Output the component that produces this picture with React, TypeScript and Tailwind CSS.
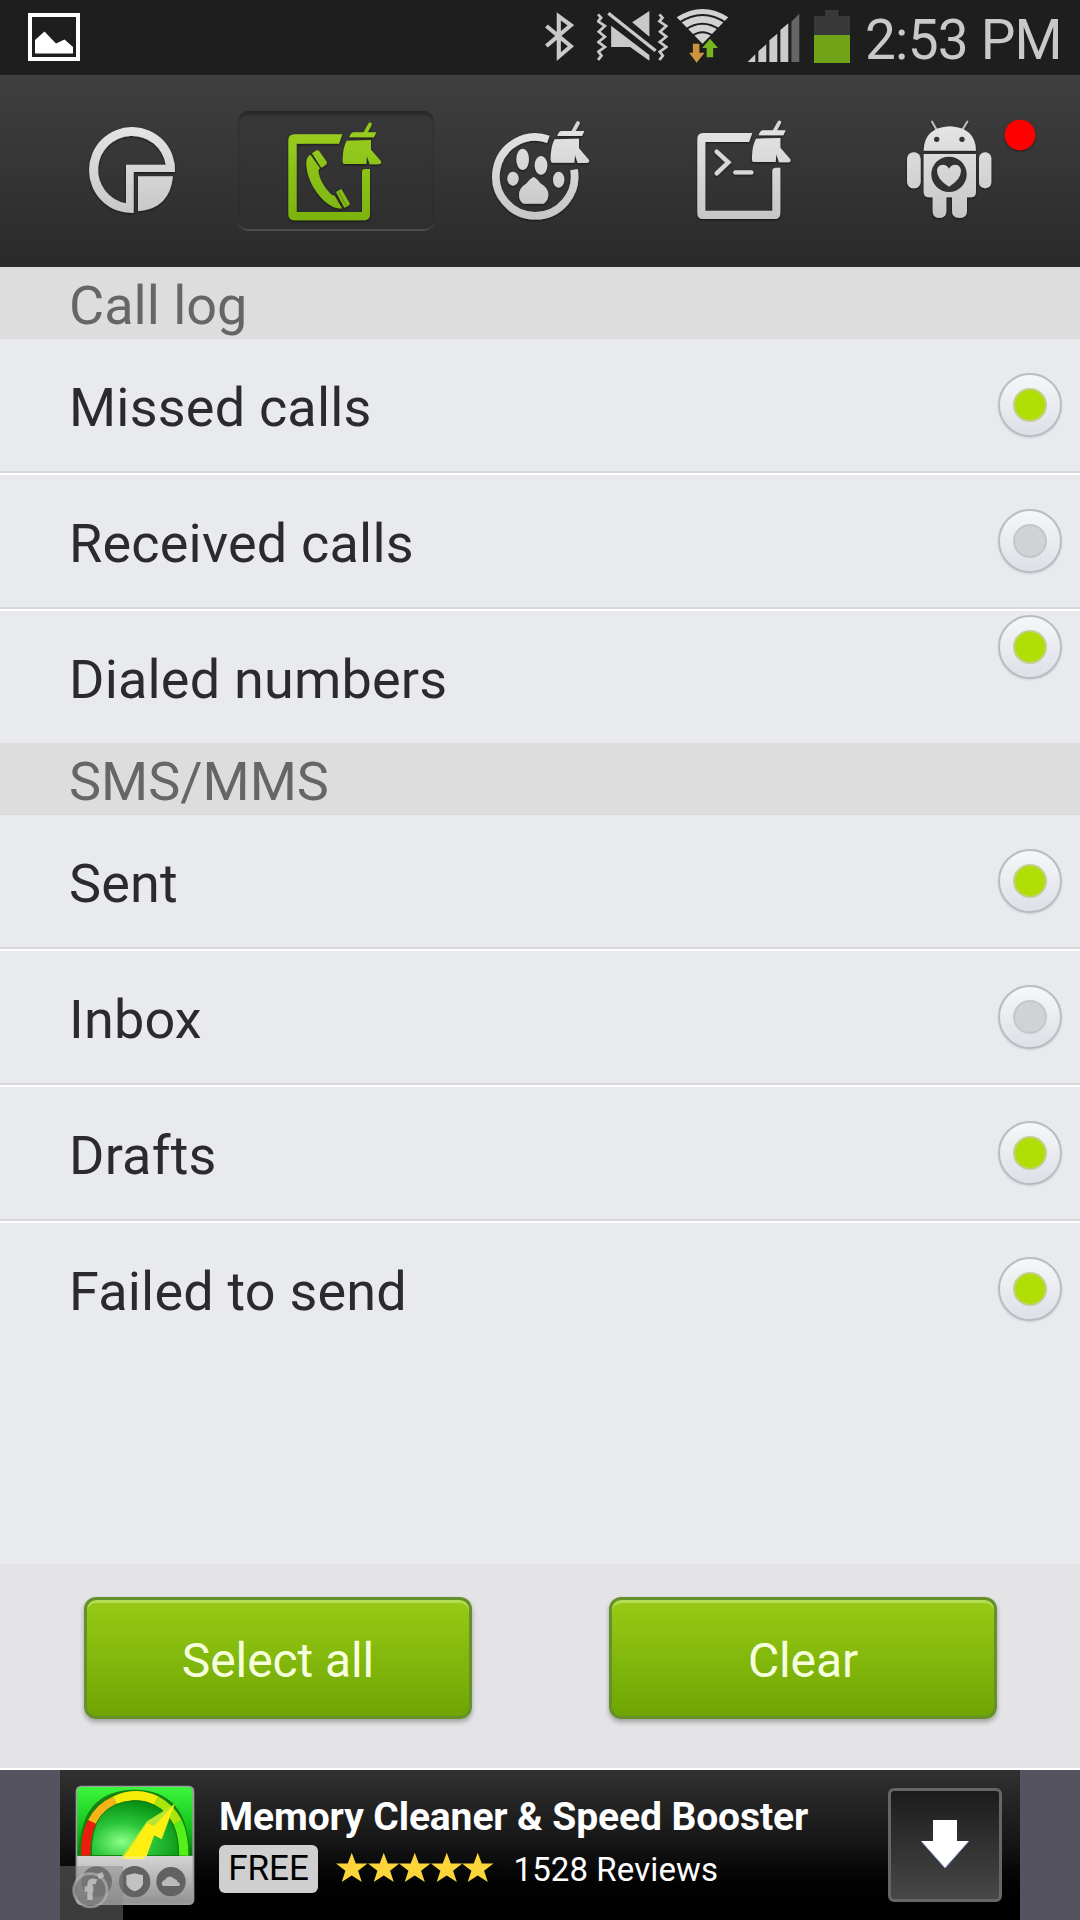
import React, { useState } from 'react';

type Item = { id: string; label: string; last?: boolean; raised?: boolean };

const callLog: Item[] = [
  { id: 'missed', label: 'Missed calls' },
  { id: 'received', label: 'Received calls' },
  { id: 'dialed', label: 'Dialed numbers', last: true, raised: true },
];

const messages: Item[] = [
  { id: 'sent', label: 'Sent' },
  { id: 'inbox', label: 'Inbox' },
  { id: 'drafts', label: 'Drafts' },
  { id: 'failed', label: 'Failed to send', last: true },
];

const allIds = [...callLog, ...messages].map((item) => item.id);

function StatusBar() {
  return (
    <div className="flex h-[75px] shrink-0 bg-[#1e1e1e] pl-7">
      <svg className="h-[75px] w-[52px]" viewBox="0 0 52 75">
        <rect x="2" y="15" width="48" height="44" fill="none" stroke="#fff" strokeWidth="4" />
        <path d="M7 53.5V40l9.500-8.500L28 43.500l8.500-4L45 47v6.500z" fill="#fff" />
      </svg>
      {/* bluetooth */}
      <svg className="ml-[465px] h-[75px] w-[29px]" viewBox="15 0 84 225" preserveAspectRatio="none">
        <path d="M19 78 90 139 55 170V49L90 76 19 138" fill="none" stroke="#c9c9c9" strokeWidth="12" />
      </svg>
      {/* sound off + vibrate */}
      <svg className="ml-[23px] h-[75px] w-[71px]" viewBox="165 0 206 225" preserveAspectRatio="none">
        <g fill="none" stroke="#c9c9c9" strokeWidth="8">
          <path d="M168 43l9 10-9 11 20 14-18 17 18 15-19 16 19 15-19 14 9 12-10 13" />
          <path d="M346 43l9 10-9 11 20 14-18 17 18 15-19 16 19 15-19 14 9 12-10 13" />
          <path d="M198 40 335 152" strokeWidth="10" />
        </g>
        <path d="M317 33v77l-50-43zM206 77l111 88v17l-56-41h-55z" fill="#c9c9c9" />
      </svg>
      {/* wifi */}
      <svg className="ml-2 h-[75px] w-[53px]" viewBox="394 0 154 225" preserveAspectRatio="none">
        <path d="M471 131 396 52Q471 2 546 52z" fill="#d2d2d2" />
        <g fill="none" stroke="#1e1e1e" strokeWidth="6">
          <path d="M402 69q69-48 138 0" />
          <path d="M421 89q50-36 100 0" />
          <path d="M438 110q33-26 66 0" />
        </g>
        <path d="M443 131h19v27h15l-23 30-22-30h11z" fill="#cf9440" />
        <path d="M493 116l23 28h-14v28h-19v-28h-13z" fill="#76b51b" />
      </svg>
      {/* signal strength */}
      <svg className="ml-[18px] h-[75px] w-[53px]" viewBox="600 0 154 225" preserveAspectRatio="none">
        <path d="M602 186l22-23v23zM633 186v-32l23-21v53zM665 186v-65l23-20v85zM697 186V90l23-20v116z" fill="#cbcbcb" />
        <path d="M729 186V65l23-24v145z" fill="#666" />
      </svg>
      {/* battery */}
      <svg className="ml-3.5 h-[75px] w-9" viewBox="796 0 104 225" preserveAspectRatio="none">
        <path d="M828 30h39v18h33v58H796V48h32z" fill="#393939" />
        <path d="M796 105h104v84H796z" fill="#70a317" />
      </svg>
      <span className="ml-[15px] mt-2 whitespace-nowrap text-[55px] leading-[64px] tracking-[-0.8px] text-[#c9c9c9]">
        2:53 PM
      </span>
    </div>
  );
}

function Broom({ transform, fill }: { transform: string; fill: string }) {
  return (
    <g transform={transform} fill={fill}>
      <path d="M354 69 338 98" stroke="#d5d5d5" strokeWidth="11" strokeLinecap="round" className={fill === 'url(#green)' ? 'stroke-[#8fc61b]' : ''} />
      <path d="M303 93h70l-7 15h-74q3-12 11-15z" />
      <path d="M284 118l73-2v29l30 35q3 9-9 9h-25l-8-24-2 23h-66q-6 0-5-16 1-34 12-54z" />
    </g>
  );
}

function NavIcon({ viewBox, children }: { viewBox: string; children: React.ReactNode }) {
  return (
    <svg className="h-[116px] w-[196px] overflow-visible" viewBox={viewBox}>
      <g filter="url(#drop)">{children}</g>
    </svg>
  );
}

function NavBar() {
  return (
    <nav className="flex h-48 shrink-0 items-start gap-2 bg-linear-to-b from-[#3f3f3f] via-[#353535] to-[#2a2a2a] pl-[34px] pt-[38px]">
      <svg className="absolute h-0 w-0">
        <defs>
          <linearGradient id="silver" gradientUnits="userSpaceOnUse" x1="0" y1="80" x2="0" y2="360">
            <stop offset="0" stopColor="#e4e4e4" />
            <stop offset="1" stopColor="#c6c6c6" />
          </linearGradient>
          <linearGradient id="green" gradientUnits="userSpaceOnUse" x1="0" y1="70" x2="0" y2="365">
            <stop offset="0" stopColor="#9bcf20" />
            <stop offset="1" stopColor="#7bb30f" />
          </linearGradient>
          <filter id="drop" x="-20%" y="-20%" width="140%" height="140%">
            <feDropShadow dx="0" dy="3" stdDeviation="3" floodColor="#000" floodOpacity="0.6" />
          </filter>
        </defs>
      </svg>

      <NavIcon viewBox="-78 39 588 348">
        <path
          fill="url(#silver)"
          fillRule="evenodd"
          d="M221 339A129 129 0 1 1 345 216H221zM198 310V194H317A102 102 0 1 0 198 310z"
        />
        <path d="M234 229H339Q329 327 234 334z" fill="url(#silver)" />
      </NavIcon>

      <div className="-mt-0.5 rounded-[10px] border-y-2 border-t-[#272727] border-b-[#4c4c4c] bg-[#333]/30 shadow-[inset_0_2px_3px_rgba(0,0,0,0.25)]">
        <NavIcon viewBox="534 39 588 348">
          <path
            fill="url(#green)"
            d="M847 103 837 131H710V336H906V213Q907 207 917 207H930V343Q930 361 911 361H704Q685 361 685 342V122Q685 103 704 103z"
          />
          <path
            fill="url(#green)"
            d="M751 164Q738 171 739 195Q744 255 793 303Q820 327 846 325L824 287Q816 287 810 280Q779 247 775 213Q776 207 780 205zM756 160 770 151Q775 150 779 155L801 187Q801 192 796 196L784 203zM828 276 844 267 869 310Q870 315 864 318L853 323z"
          />
          <path d="M836 275 859 318" stroke="#4f7610" strokeWidth="2" />
          <Broom transform="translate(576 4)" fill="url(#green)" />
        </NavIcon>
      </div>

      <NavIcon viewBox="-54 39 588 348">
        <path
          d="M265 118A118 118 0 1 0 342 209"
          fill="none"
          stroke="url(#silver)"
          strokeWidth="23"
        />
        <g fill="url(#silver)">
          <ellipse cx="188" cy="178" rx="19" ry="32" />
          <ellipse cx="243" cy="196" rx="19" ry="28" />
          <ellipse cx="159" cy="236" rx="17" ry="21" />
          <ellipse cx="296" cy="239" rx="17" ry="24" />
          <path d="M221 231Q230 235 241 250Q266 265 265 285Q264 304 250 311H191Q177 304 177 285Q177 264 200 250Q211 235 221 231z" />
        </g>
        <Broom transform="translate(0 0)" fill="url(#silver)" />
      </NavIcon>

      <NavIcon viewBox="558 39 588 348">
        <path
          fill="url(#silver)"
          d="M877 99 867 126H736V332H937V211Q938 203 948 203H961V338Q961 357 943 357H730Q712 357 712 339V117Q712 99 730 99z"
        />
        <g fill="none" stroke="#d8d8d8" strokeWidth="13" strokeLinecap="round">
          <path d="M770 155 805 187 770 220" />
          <path d="M826 217h48" />
        </g>
        <Broom transform="translate(604 -2)" fill="url(#silver)" />
      </NavIcon>

      <NavIcon viewBox="-30 39 588 348">
        <g fill="url(#silver)">
          <path d="M216 65 229 88M322 65 308 88" stroke="#bdbdbd" strokeWidth="6" strokeLinecap="round" />
          <path d="M191 152Q192 83 269 79Q347 83 348 152z" />
          <rect x="141" y="157" width="41" height="108" rx="20" />
          <rect x="357" y="157" width="37" height="108" rx="18" />
          <path d="M191 162H348V276Q348 292 332 292H321V334Q321 354 299 354Q276 354 276 334V292H259V334Q259 354 238 354Q218 354 218 334V292H207Q191 292 191 276z" />
        </g>
        <circle cx="230" cy="118" r="8" fill="#303030" />
        <circle cx="306" cy="118" r="8" fill="#303030" />
        <circle cx="267" cy="223" r="53" fill="#303030" />
        <path
          d="M267 260Q231 238 231 212Q232 195 248 194Q261 194 267 206Q273 194 286 194Q302 195 303 212Q303 238 267 260z"
          fill="url(#silver)"
        />
        <circle cx="480" cy="105" r="46" fill="#ff0000" />
      </NavIcon>
    </nav>
  );
}

function SectionHeader({ title }: { title: string }) {
  return (
    <div className="flex h-[72px] shrink-0 items-center border-b border-[#d8d8da] bg-[#dddddd] pl-[69px] pt-1.5 text-[54px] leading-none text-[#666]">
      {title}
    </div>
  );
}

function Radio({ checked }: { checked: boolean }) {
  return (
    <span className="flex size-16 items-center justify-center rounded-full border-2 border-[#b9bcc1] bg-linear-to-b from-[#f6f7f9] to-[#dde0e7] shadow-[0_1px_2px_rgba(0,0,0,0.12)]">
      <span
        className={
          checked
            ? 'size-[34px] rounded-full border-2 border-[#c3cf8e] bg-[#b1de05]'
            : 'size-[34px] rounded-full border-2 border-[#c6c7c8] bg-[#d1d2d3]'
        }
      />
    </span>
  );
}

type RowProps = { item: Item; checked: boolean; onToggle: (id: string) => void };

function Row({ item, checked, onToggle }: RowProps) {
  return (
    <div className={item.last ? 'shrink-0' : 'shrink-0 border-b-2 border-white'}>
      <div
        onClick={() => onToggle(item.id)}
        className={
          item.last
            ? 'flex h-[132px] justify-between pl-[69px] pr-[18px]'
            : 'flex h-[134px] justify-between border-b-2 border-[#d7d9db] pl-[69px] pr-[18px]'
        }
      >
        <span className="mt-[39px] text-[54px] leading-[60px] tracking-[0.2px] text-[#2b2b2d]">{item.label}</span>
        <div className={item.raised ? 'pt-1' : 'pt-[34px]'}>
          <Radio checked={checked} />
        </div>
      </div>
    </div>
  );
}

function ActionButton({ label, onClick }: { label: string; onClick: () => void }) {
  return (
    <button
      onClick={onClick}
      className="h-[122px] w-[388px] rounded-xl border-[3px] border-[#65902a] bg-linear-to-b from-[#97cb16] to-[#6fa503] pt-[5px] text-5xl tracking-[-0.1px] text-[#f6ffdc] shadow-[inset_0_3px_0_#b4dc56,0_3px_5px_rgba(0,0,0,0.3)]"
    >
      {label}
    </button>
  );
}

function AppBadge() {
  return (
    <svg className="h-[150px] w-[140px]" viewBox="60 30 420 450">
      <defs>
        <radialGradient id="dial" cx="0.35" cy="0.75" r="0.75">
          <stop offset="0" stopColor="#8cff86" />
          <stop offset="0.45" stopColor="#2cc73b" />
          <stop offset="1" stopColor="#078f12" />
        </radialGradient>
        <linearGradient id="face" x1="0" y1="0" x2="0" y2="1">
          <stop offset="0" stopColor="#3df53e" />
          <stop offset="0.6" stopColor="#12c41a" />
          <stop offset="1" stopColor="#047a0b" />
        </linearGradient>
        <linearGradient id="base" x1="0" y1="0" x2="0" y2="1">
          <stop offset="0" stopColor="#d5d5d5" />
          <stop offset="1" stopColor="#929292" />
        </linearGradient>
      </defs>
      <rect x="107" y="77" width="356" height="358" rx="16" fill="#9a9d9a" />
      <path d="M112 287V94Q112 81 125 81H444Q457 81 457 94V287z" fill="url(#face)" />
      <path d="M118 287Q116 90 284 89Q448 90 448 287z" fill="#16820f" />
      <g fill="none" strokeWidth="28">
        <path d="M138 287Q134 228 157 186" stroke="#ee1c0c" />
        <path d="M157 186Q178 143 225 122" stroke="#f7b318" />
        <path d="M225 122Q290 92 349 122" stroke="#f5ed08" />
        <path d="M349 122Q391 145 413 187" stroke="#a8e60c" />
        <path d="M413 187Q432 228 431 287" stroke="#55ef19" />
      </g>
      <path d="M154 287Q149 128 284 122Q415 128 416 287z" fill="url(#dial)" stroke="#117d10" strokeWidth="3" />
      <path d="M404 132 321 184 240 297H316L343 226 366 238z" fill="#b6e632" />
      <path d="M404 132 343 198 321 190 248 297H317L342 225 363 236z" fill="#ffef12" />
      <path d="M112 288H458V417Q458 430 445 430H125Q112 430 112 417z" fill="url(#base)" />
      <path d="M254 288H316L312 297H247z" fill="#ffef52" />
      <g fill="#626262">
        <circle cx="170" cy="365" r="46" />
        <circle cx="284" cy="365" r="47" />
        <circle cx="393" cy="365" r="44" />
      </g>
      <path d="M259 346 284 340 309 346V371Q306 386 284 394Q262 386 259 371z" fill="#c2c2c2" />
      <path d="M368 378Q360 365 375 359Q386 341 403 356Q412 358 413 366Q425 371 417 378z" fill="#bababa" />
      <rect x="60" y="318" width="189" height="162" fill="#858585" fillOpacity="0.45" />
      <circle cx="151" cy="391" r="50" fill="#777" fillOpacity="0.6" stroke="#bbb" strokeOpacity="0.6" strokeWidth="8" />
      <path
        d="M150 420V373Q151 358 169 366M134 387H160M174 350 190 343"
        fill="none"
        stroke="#c8c8c8"
        strokeOpacity="0.8"
        strokeWidth="16"
      />
    </svg>
  );
}

function Star() {
  return (
    <svg className="h-[31px] w-[31.5px]" viewBox="0 0 94 92">
      <path d="M47 2 59 34H94L66 56 77 89 47 70 17 89 28 56 0 34H35z" fill="#fbd53a" />
    </svg>
  );
}

function AdBanner() {
  return (
    <div className="flex h-[150px] shrink-0 bg-[#54535f] px-[60px]">
      <div className="flex w-[960px] bg-linear-to-b from-[#313131] via-[#151515] to-black">
        <AppBadge />
        <div className="ml-[19px] mt-[22px] w-[669px]">
          <div className="whitespace-nowrap text-[39px] font-bold leading-[50px] tracking-[-0.1px] text-white">
            Memory Cleaner &amp; Speed Booster
          </div>
          <div className="mt-[3px] flex h-12 items-center">
            <span className="flex h-12 w-[99px] items-center justify-center rounded-md bg-[#cfcfcf] text-[35px] text-black">
              FREE
            </span>
            <div className="ml-[18px] flex pb-1">
              {[1, 2, 3, 4, 5].map((n) => (
                <Star key={n} />
              ))}
            </div>
            <span className="ml-[20px] text-[33px] leading-none tracking-[0.1px] text-white">1528 Reviews</span>
          </div>
        </div>
        <div className="mt-[18px] flex size-[114px] items-center justify-center rounded-md border-[3px] border-[#666] bg-linear-to-b from-[#1c1c1c] to-[#484848]">
          <svg className="mb-0.5 h-12 w-12" viewBox="0 0 48 48">
            <path d="M12 0H36V21H48L24 48 0 21H12z" fill="#fff" />
            <path d="M0 21 24 48 48 21" fill="none" stroke="#8ea2dd" strokeWidth="1" />
          </svg>
        </div>
      </div>
    </div>
  );
}

export default function App() {
  const [selected, setSelected] = useState<string[]>(['missed', 'dialed', 'sent', 'drafts', 'failed']);

  const toggle = (id: string) => {
    setSelected((prev) => (prev.includes(id) ? prev.filter((x) => x !== id) : [...prev, id]));
  };

  return (
    <div className="flex h-[1920px] w-[1080px] flex-col overflow-hidden bg-[#e9eaee] font-[Roboto,sans-serif]">
      <StatusBar />
      <NavBar />

      <main className="flex h-[1297px] shrink-0 flex-col">
        <SectionHeader title="Call log" />
        {callLog.map((item) => (
          <Row key={item.id} item={item} checked={selected.includes(item.id)} onToggle={toggle} />
        ))}
        <SectionHeader title="SMS/MMS" />
        {messages.map((item) => (
          <Row key={item.id} item={item} checked={selected.includes(item.id)} onToggle={toggle} />
        ))}
      </main>

      <div className="flex h-[206px] shrink-0 justify-between border-b-2 border-white bg-[#e4e4e6] pl-[84px] pr-[83px] pt-[33px]">
        <ActionButton label="Select all" onClick={() => setSelected(allIds)} />
        <ActionButton label="Clear" onClick={() => setSelected([])} />
      </div>

      <AdBanner />
    </div>
  );
}
